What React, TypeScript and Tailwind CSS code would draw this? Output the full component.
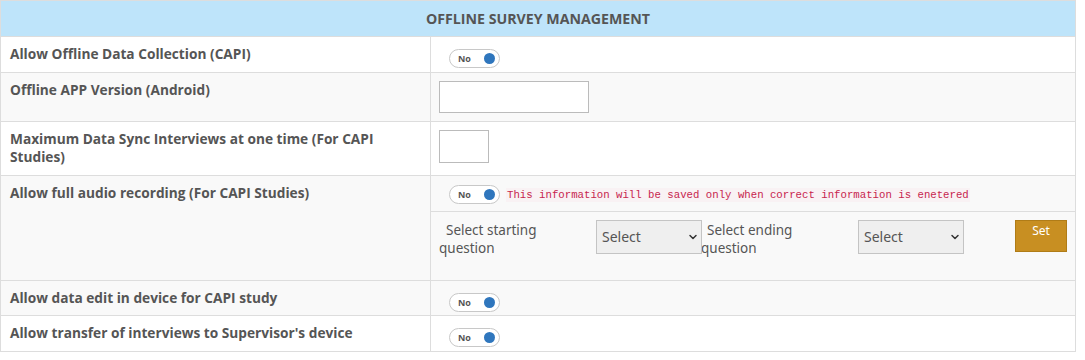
import { ChevronDown } from 'lucide-react';

const labelFont = { fontFamily: '"Open Sans", "Liberation Sans", sans-serif' };

function Toggle() {
  return (
    <div className="flex items-center justify-between w-[51px] h-[19px] rounded-full border border-[#c8c8c8] bg-white pl-[8px] pr-[4px]">
      <span className="text-[9px] font-bold text-[#555] leading-none">No</span>
      <span className="w-[11px] h-[11px] rounded-full bg-[#2f76bd]" />
    </div>
  );
}

function QuestionSelect() {
  return (
    <div className="relative w-[106px] h-[34px] shrink-0">
      <select className="appearance-none w-full h-full bg-[#efefef] border border-[#c4c4c4] pl-[5px] text-[14px] text-[#555] outline-none">
        <option>Select</option>
      </select>
      <ChevronDown className="absolute right-[3px] top-[11px] w-[12px] h-[12px] text-[#333] pointer-events-none" strokeWidth={3} />
    </div>
  );
}

function Row({
  label,
  height,
  shaded,
  last,
  children,
}: {
  label: string;
  height: string;
  shaded?: boolean;
  last?: boolean;
  children: React.ReactNode;
}) {
  return (
    <div className={`flex ${height} ${shaded ? 'bg-[#f9f9f9]' : 'bg-white'} ${last ? '' : 'border-b border-[#dddddd]'}`}>
      <div className="w-[430px] shrink-0 border-r border-[#dddddd] pl-[9px] pr-[18px] pt-[8px] text-[13.7px] leading-[18px] font-bold text-[#555]">
        {label}
      </div>
      <div className="flex-1">{children}</div>
    </div>
  );
}

export default function App() {
  return (
    <div className="bg-white w-[1085px] h-[360px]" style={labelFont}>
      <div className="w-[1076px] border border-[#dddddd]">
        <div className="h-[36px] flex items-center justify-center bg-[#bee4fa] border-b border-[#dddddd] text-[14.2px] font-bold text-[#555]">
          OFFLINE SURVEY MANAGEMENT
        </div>

        <Row label="Allow Offline Data Collection (CAPI)" height="h-[36px]">
          <div className="pl-[18px] pt-[12px]">
            <Toggle />
          </div>
        </Row>

        <Row label="Offline APP Version (Android)" height="h-[49px]" shaded>
          <div className="pl-[8px] pt-[8px]">
            <input className="w-[150px] h-[32px] border border-[#bbbbbb] bg-white outline-none" />
          </div>
        </Row>

        <Row label="Maximum Data Sync Interviews at one time (For CAPI Studies)" height="h-[54px]">
          <div className="pl-[8px] pt-[8px]">
            <input className="w-[50px] h-[33px] border border-[#bbbbbb] bg-white outline-none" />
          </div>
        </Row>

        <Row label="Allow full audio recording (For CAPI Studies)" height="h-[105px]" shaded>
          <div className="h-[36px] flex items-center border-b border-[#dddddd] pl-[18px] pt-[2px]">
            <Toggle />
            <code
              className="ml-[6px] px-[1px] bg-[#f9f2f4] text-[#c7254e] text-[10.7px] leading-[14px]"
              style={{ fontFamily: '"Liberation Mono", "DejaVu Sans Mono", monospace' }}
            >
              This information will be saved only when correct information is enetered
            </code>
          </div>
          <div
            className="flex items-start pl-[8px] pt-[8px] text-[13.5px] leading-[18px] text-[#555]"
            style={{ fontFamily: '"Noto Sans", "Open Sans", sans-serif' }}
          >
            <div className="w-[157px] shrink-0 indent-[7px] pr-[12px] pt-[1px]">Select starting question</div>
            <QuestionSelect />
            <div className="w-[156px] shrink-0 indent-[6px] pr-[12px] pt-[1px] -ml-px">Select ending question</div>
            <div className="ml-px">
              <QuestionSelect />
            </div>
            <button className="ml-[51px] w-[52px] h-[32px] bg-[#c88f22] border border-[#b07c17] text-white text-[12px] pt-[1px] flex justify-center items-start">
              Set
            </button>
          </div>
        </Row>

        <Row label="Allow data edit in device for CAPI study" height="h-[35px]" shaded>
          <div className="pl-[18px] pt-[12px]">
            <Toggle />
          </div>
        </Row>

        <Row label="Allow transfer of interviews to Supervisor's device" height="h-[35px]" last>
          <div className="pl-[18px] pt-[12px]">
            <Toggle />
          </div>
        </Row>
      </div>
    </div>
  );
}
